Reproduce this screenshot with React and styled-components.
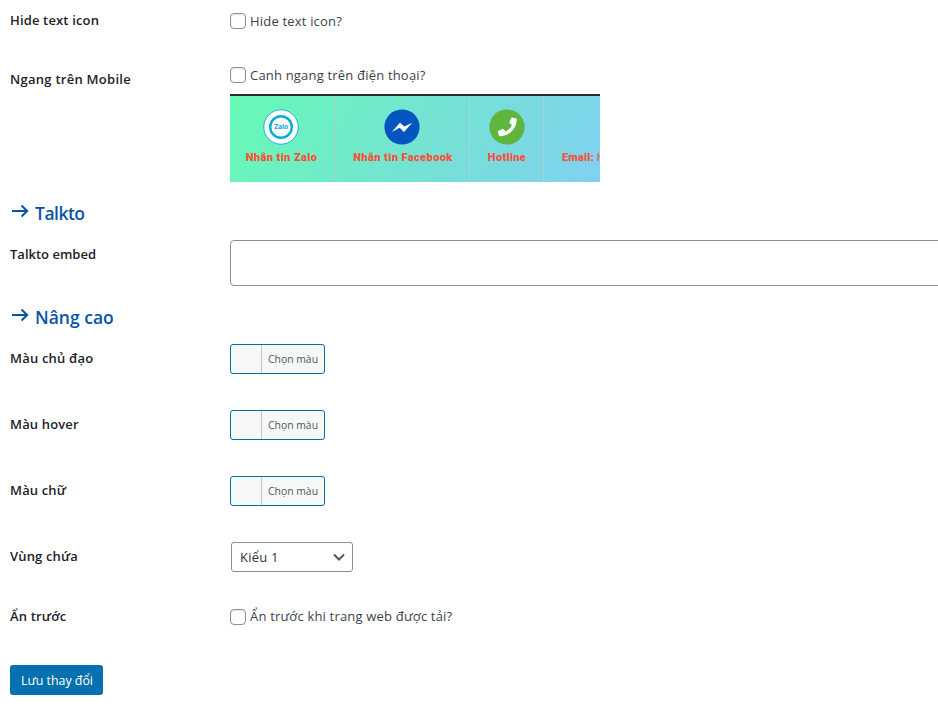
import React from "react";
import styled, { createGlobalStyle } from "styled-components";

const GlobalStyle = createGlobalStyle`
  * { box-sizing: border-box; }
  html, body { margin: 0; background: #fff; overflow: hidden; }
  body {
    font-family: "Open Sans", "Noto Sans", sans-serif;
    font-size: 13px;
    line-height: 20px;
    color: #3c434a;
  }
`;

const Page = styled.main`
  width: 938px;
  height: 712px;
  overflow: hidden;
  padding-left: 10px;
`;

const Row = styled.div`
  display: grid;
  grid-template-columns: 220px 1fr;
  align-items: start;
  height: ${(p) => p.$height}px;
`;

const Label = styled.div`
  padding-top: ${(p) => p.$top}px;
  color: #1d2327;
  font-weight: 600;
  letter-spacing: ${(p) => p.$track ?? 0.15}px;
  white-space: nowrap;
`;

const Field = styled.div`
  padding-top: ${(p) => p.$top}px;
`;

const CheckLabel = styled.label`
  display: flex;
  align-items: center;
  height: 20px;
  gap: 4px;
  white-space: nowrap;
  letter-spacing: 0.19px;
`;

const CheckText = styled.span`
  padding-bottom: ${(p) => p.$lift || 0}px;
`;

const Checkbox = styled.input.attrs({ type: "checkbox" })`
  appearance: none;
  flex: none;
  width: 16px;
  height: 16px;
  margin: 0;
  border: 1px solid #8c8f94;
  border-radius: 4px;
  background: #fff;
  box-shadow: inset 0 1px 2px rgba(0, 0, 0, 0.1);
`;

const Heading = styled.h2`
  display: flex;
  align-items: center;
  gap: 5px;
  height: 38px;
  margin: 0;
  color: #0a54a6;
  font-size: 17.5px;
  font-weight: 550;
  letter-spacing: ${(p) => p.$track || 0}px;
`;

const ArrowIcon = styled.svg`
  flex: none;
  width: 20px;
  height: 20px;
  margin-top: -5px;
`;

const TextArea = styled.textarea`
  display: block;
  width: 760px;
  height: 46px;
  padding: 2px 6px;
  border: 1px solid #8c8f94;
  border-radius: 4px;
  background: #fff;
  resize: none;
`;

const ColorButton = styled.button`
  display: flex;
  width: 95px;
  height: 30px;
  padding: 0 0 0 30px;
  border: 1px solid #0071a1;
  border-radius: 3px;
  background: #f6f7f7;
  overflow: hidden;
`;

const ColorText = styled.span`
  flex: 1;
  height: 28px;
  padding-left: 6px;
  border-left: 1px solid #c3c4c7;
  color: #50575e;
  font-family: "Open Sans", "Noto Sans", sans-serif;
  font-size: 10.4px;
  line-height: 28px;
  text-align: left;
  white-space: nowrap;
`;

const Select = styled.button`
  display: flex;
  align-items: center;
  justify-content: space-between;
  width: 122px;
  height: 30px;
  margin-left: 1px;
  padding: 0 7px 0 8px;
  border: 1px solid #8c8f94;
  border-radius: 3px;
  background: #fff;
  color: #2c3338;
  font: inherit;
  letter-spacing: 0.2px;
`;

const Chevron = styled.svg`
  width: 12px;
  height: 12px;
  fill: none;
  stroke: #50575e;
  stroke-width: 2;
`;

const Submit = styled.button`
  display: block;
  width: 93px;
  height: 30px;
  padding: 2px 0 0 1px;
  border: 0;
  border-radius: 3px;
  background: #0671ae;
  color: #fff;
  font: inherit;
  font-size: 12.4px;
`;

const Preview = styled.div`
  display: grid;
  grid-template-columns: 105px 135px 74px 56px;
  width: 370px;
  height: 88px;
  margin-top: 9px;
  overflow: hidden;
  border-top: 2px solid #2c2c24;
  background: linear-gradient(118deg, #67fab5 0%, #78dcdc 68%, #7fd1f1 100%);
`;

const PreviewCell = styled.div`
  display: flex;
  flex-direction: column;
  align-items: ${(p) => (p.$start ? "flex-start" : "center")};
  padding: 13px ${(p) => p.$inset || 0}px 0 ${(p) => (p.$start ? 18 : 0)}px;
  border-right: ${(p) => (p.$start ? 0 : 1)}px solid #a9d3d2;
  color: #fa5038;
  font-family: Roboto, sans-serif;
  font-size: 11px;
  font-weight: 900;
  line-height: 16px;
  white-space: nowrap;
  overflow: hidden;
`;

const Caption = styled.span`
  letter-spacing: ${(p) => p.$track}px;
  margin-left: ${(p) => p.$shift || 0}px;
`;

const Badge = styled.svg`
  flex: none;
  width: 36px;
  height: 36px;
  margin-bottom: 5px;
`;

const BadgeGap = styled.div`
  flex: none;
  height: 41px;
`;

const Faded = styled.span`
  opacity: 0.7;
`;

const Arrow = () => (
  <ArrowIcon viewBox="0 0 20 20" fill="none" stroke="currentColor" strokeWidth="2">
    <path d="M2 10H17M11.5 4.5L17.2 10L11.5 15.5" />
  </ArrowIcon>
);

const ZaloBadge = () => (
  <Badge viewBox="0 0 36 36">
    <circle cx="18" cy="18" r="17.2" fill="#fff" stroke="#08acd8" strokeWidth=".9" />
    <circle cx="18" cy="18" r="10.8" fill="#fff" stroke="#05add2" strokeWidth="2.4" />
    <text x="18" y="20.4" textAnchor="middle" fontFamily="Inter, sans-serif" fontSize="6.6" fontWeight="700" fill="#05a8cd">Zalo</text>
  </Badge>
);

const MessengerBadge = () => (
  <Badge viewBox="0 0 36 36">
    <circle cx="18" cy="18" r="17.6" fill="#0455bd" />
    <path d="M7.8 23L16 13.8L20.3 17.6L28.2 13.8L20 23L15.7 18.7Z" fill="#fff" />
  </Badge>
);

const PhoneBadge = () => (
  <Badge viewBox="0 0 36 36">
    <circle cx="18" cy="18" r="17.6" fill="#60b53e" />
    <g transform="translate(9 8.5) scale(.0365)">
      <path fill="#fff" d="M493.4 24.6l-104-24c-11.3-2.6-22.9 3.3-27.5 13.9l-48 112c-4.2 9.8-1.4 21.3 6.9 28l60.6 49.6c-36 76.7-98.9 140.5-177.2 177.2l-49.6-60.6c-6.8-8.3-18.2-11.1-28-6.9l-112 48C3.9 366.5-2 378.1.6 389.4l24 104C27.1 504.2 36.7 512 48 512c256.1 0 464-207.5 464-464 0-11.2-7.7-20.9-18.6-23.4z" />
    </g>
  </Badge>
);

const ColorPicker = () => (
  <ColorButton type="button">
    <ColorText>Chọn màu</ColorText>
  </ColorButton>
);

const Check = ({ children, lift }) => (
  <CheckLabel>
    <Checkbox />
    <CheckText $lift={lift}>{children}</CheckText>
  </CheckLabel>
);

export default function App() {
  return (
    <Page>
      <GlobalStyle />
      <Row $height={55}>
        <Label $top={10}>Hide text icon</Label>
        <Field $top={11}><Check>Hide text icon?</Check></Field>
      </Row>
      <Row $height={139}>
        <Label $top={14} $track={0.27}>Ngang trên Mobile</Label>
        <Field $top={10}>
          <Check>Canh ngang trên điện thoại?</Check>
          <Preview>
            <PreviewCell $inset={3}><ZaloBadge /><Caption $track={0.42} $shift={2}>Nhắn tin Zalo</Caption></PreviewCell>
            <PreviewCell><MessengerBadge /><Caption $track={0.42} $shift={2}>Nhắn tin Facebook</Caption></PreviewCell>
            <PreviewCell><PhoneBadge /><Caption $track={0.35} $shift={1}>Hotline</Caption></PreviewCell>
            <PreviewCell $start><BadgeGap /><Caption $track={0.2}>Email: <Faded>h</Faded></Caption></PreviewCell>
          </Preview>
        </Field>
      </Row>
      <Heading $track={-0.5}><Arrow />Talkto</Heading>
      <Row $height={66}>
        <Label $top={12} $track={0}>Talkto embed</Label>
        <Field $top={8}><TextArea /></Field>
      </Row>
      <Heading><Arrow />Nâng cao</Heading>
      <Row $height={66}>
        <Label $top={12} $track={0.2}>Màu chủ đạo</Label>
        <Field $top={8}><ColorPicker /></Field>
      </Row>
      <Row $height={66}>
        <Label $top={12}>Màu hover</Label>
        <Field $top={8}><ColorPicker /></Field>
      </Row>
      <Row $height={66}>
        <Label $top={12}>Màu chữ</Label>
        <Field $top={8}><ColorPicker /></Field>
      </Row>
      <Row $height={66}>
        <Label $top={12}>Vùng chứa</Label>
        <Field $top={8}>
          <Select type="button">
            Kiểu 1
            <Chevron viewBox="0 0 12 12"><path d="M1 3.5L6 8.5L11 3.5" /></Chevron>
          </Select>
        </Field>
      </Row>
      <Row $height={65}>
        <Label $top={6}>Ẩn trước</Label>
        <Field $top={7}><Check lift={2}>Ẩn trước khi trang web được tải?</Check></Field>
      </Row>
      <Submit type="button">Lưu thay đổi</Submit>
    </Page>
  );
}
